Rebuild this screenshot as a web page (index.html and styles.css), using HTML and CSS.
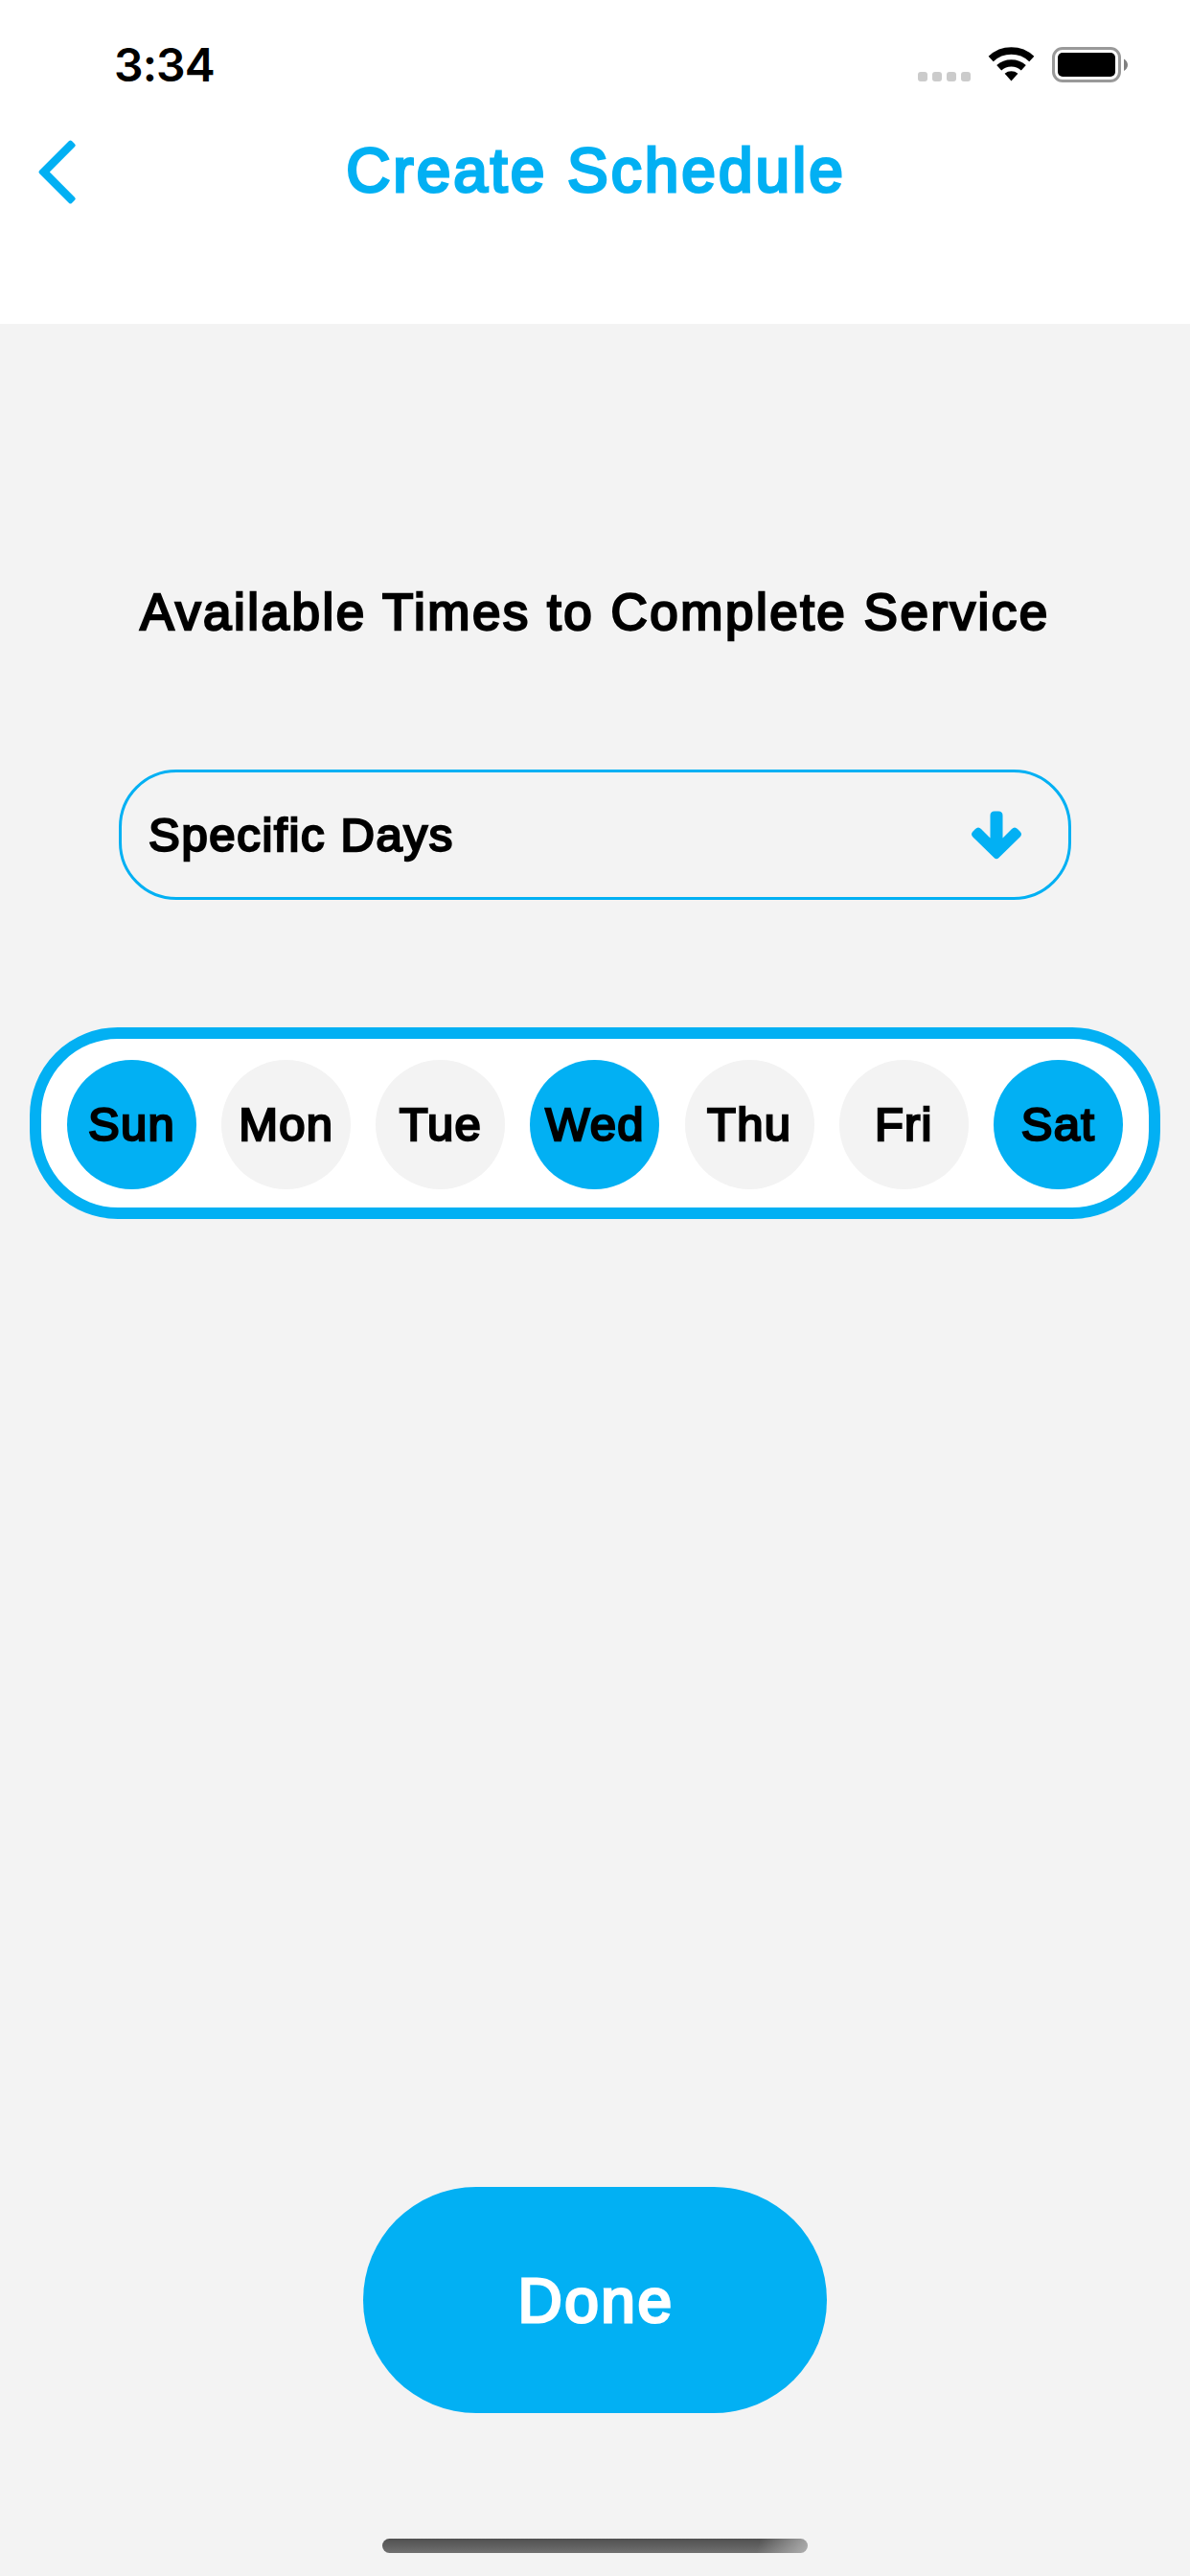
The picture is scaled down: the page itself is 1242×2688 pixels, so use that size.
FILE: index.html
```html
<!DOCTYPE html>
<html lang="en">
<head>
<meta charset="utf-8">
<title>Create Schedule</title>
<link rel="stylesheet" href="styles.css">
</head>
<body>
<div class="screen">
  <header class="header">
    <div class="status">
      <span class="time">3:34</span>
      <svg width="220" height="38" viewBox="0 0 220 38" aria-hidden="true">
        <g fill="#cbcbcb">
          <rect x="0" y="26" width="10" height="10" rx="3"/>
          <rect x="15" y="26" width="10" height="10" rx="3"/>
          <rect x="30" y="26" width="10" height="10" rx="3"/>
          <rect x="45" y="26" width="10" height="10" rx="3"/>
        </g>
        <g fill="none" stroke="#000" stroke-width="7.4">
          <path d="M76.200 12.500a31 31 0 0 1 42.600 0"/>
          <path d="M84.700 21.800a19 19 0 0 1 25.600 0"/>
        </g>
        <path d="M90.600 27.800a11 11 0 0 1 13.800 0L97.500 35.500z"/>
        <rect x="141.500" y="1.500" width="69" height="34" rx="9.500" fill="none" stroke="#999" stroke-width="3"/>
        <rect x="146" y="6" width="60" height="25" rx="5"/>
        <path d="M215 12.500c5.300 2.500 5.300 10 0 12.500z" fill="#808080"/>
      </svg>
    </div>
    <div class="nav">
      <svg class="back" width="48" height="76" viewBox="0 0 48 76" aria-label="Back">
        <path d="M35.500 6.500 4.500 37.500 35.500 68.500 38.700 65.300 10.900 37.500 38.700 9.700z" fill="#02b0f3" stroke="#02b0f3" stroke-width="4" stroke-linejoin="round"/>
      </svg>
      <h1 class="title">Create Schedule</h1>
    </div>
  </header>
  <main class="content">
    <h2 class="heading">Available Times to Complete Service</h2>
    <div class="select">
      <span class="select-label">Specific Days</span>
      <svg width="52" height="51" viewBox="0 0 52 51" aria-hidden="true">
        <path d="M24 .500h4q4.500 0 4.500 4.500v23.500L42 19q3-3 6 0l2.500 2.500q3 3 0 6L28.500 49q-2.500 2.500-5 0L1.500 27.500q-3-3 0-6L4 19q3-3 6 0l9.500 9.500V5q0-4.500 4.500-4.500z" fill="#02b0f3"/>
      </svg>
    </div>
    <div class="days">
      <span class="day on">Sun</span>
      <span class="day">Mon</span>
      <span class="day">Tue</span>
      <span class="day on">Wed</span>
      <span class="day">Thu</span>
      <span class="day">Fri</span>
      <span class="day on">Sat</span>
    </div>
    <button class="done">Done</button>
    <div class="home"></div>
  </main>
</div>
</body>
</html>
```
FILE: styles.css
```css
* { box-sizing: border-box; margin: 0; padding: 0; }
body {
  background: #f3f3f3;
  color: #000;
  font-family: "Arial Rounded MT Bold", "Liberation Sans", Arial, sans-serif;
}
.screen {
  width: 1242px;
  height: 2688px;
  display: flex;
  flex-direction: column;
}
.header { height: 338px; background: #fff; }
.status {
  height: 134px;
  padding: 2px 64px 0 119px;
  display: flex;
  justify-content: space-between;
  align-items: center;
}
.time {
  font: 600 48px/60px Inter, sans-serif;
  letter-spacing: -0.9px;
}
.nav {
  height: 92px;
  display: grid;
  grid-template-columns: 86px 1fr 86px;
  align-items: center;
}
.back { margin-left: 38px; }
.title, .heading, .select-label, .day, .done {
  font-weight: 400;
  white-space: nowrap;
  -webkit-text-stroke: 2.4px currentColor;
}
.title {
  padding: 0 0 4px 2px;
  font-size: 64px;
  line-height: 74px;
  letter-spacing: 3px;
  text-align: center;
  color: #02b0f3;
  -webkit-text-stroke-width: 3px;
}
.content {
  flex: 1;
  display: flex;
  flex-direction: column;
  align-items: center;
}
.heading {
  margin-top: 270px;
  font-size: 53px;
  line-height: 62px;
  letter-spacing: 2.5px;
}
.select {
  width: 994px;
  height: 136px;
  margin-top: 133px;
  padding: 0 49px 0 28px;
  border: 3px solid #02b0f3;
  border-radius: 60px;
  display: flex;
  align-items: center;
  justify-content: space-between;
}
.select-label { font-size: 49px; letter-spacing: 1.7px; }
.days {
  width: 1180px;
  height: 200px;
  margin-top: 133px;
  padding: 3px 27px 0;
  border: 12px solid #02b0f3;
  border-radius: 92px;
  background: #fff;
  display: flex;
  align-items: center;
  justify-content: space-between;
}
.day {
  width: 135px;
  height: 135px;
  padding-bottom: 2px;
  border-radius: 50%;
  background: #f3f3f3;
  display: flex;
  align-items: center;
  justify-content: center;
  font-size: 49px;
  letter-spacing: 1.2px;
}
.day.on { background: #02b0f3; }
.done {
  width: 484px;
  height: 236px;
  margin-top: auto;
  padding: 2px 0 0 2px;
  border: 0;
  border-radius: 118px;
  background: #02b0f3;
  color: #fff;
  font-family: inherit;
  font-size: 64px;
  letter-spacing: 2.5px;
  -webkit-text-stroke-width: 3px;
}
.home {
  width: 444px;
  height: 15px;
  margin: 131px 0 24px;
  border-radius: 8px;
  background:
    linear-gradient(105deg, transparent 88%, rgba(190, 190, 190, .8) 100%),
    linear-gradient(#505050, #707070);
}
```
